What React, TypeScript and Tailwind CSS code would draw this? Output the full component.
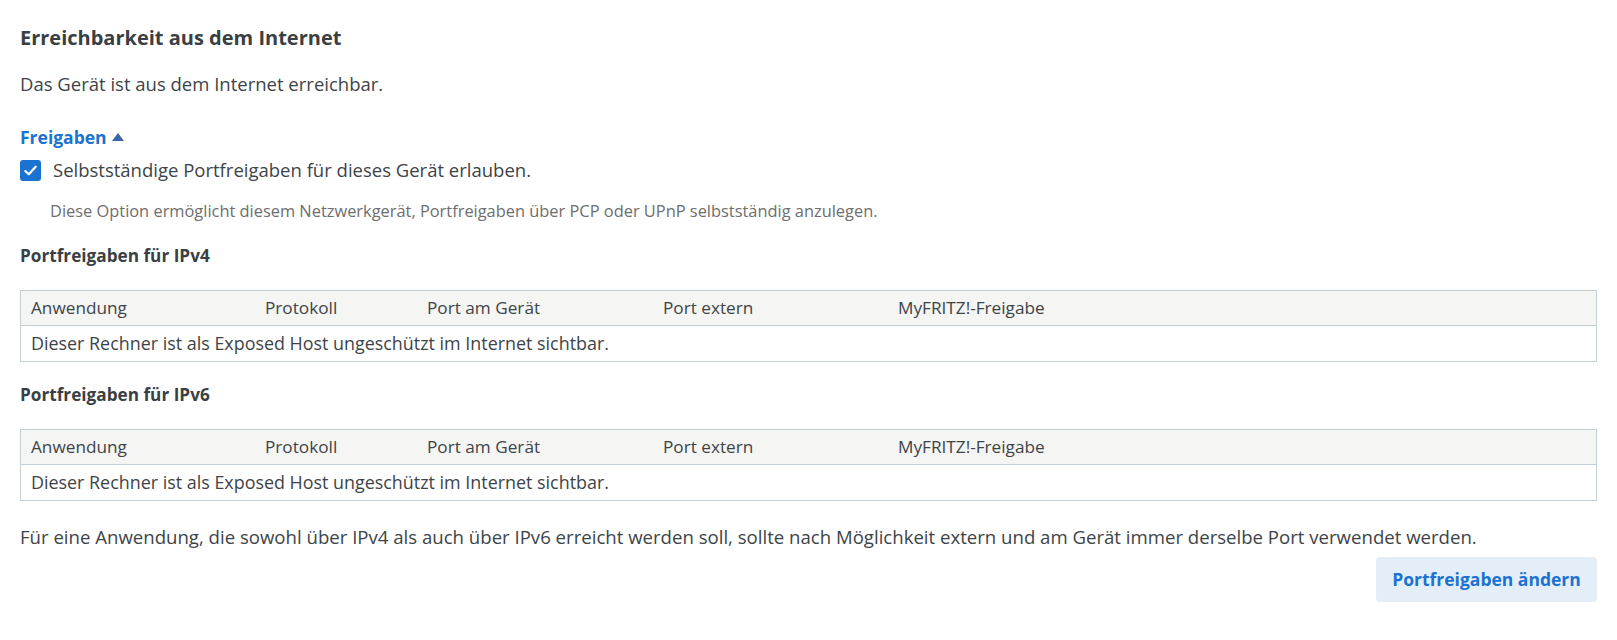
import { useState } from 'react';

const columns = ['Anwendung', 'Protokoll', 'Port am Gerät', 'Port extern', 'MyFRITZ!-Freigabe'];

function PortTable() {
  return (
    <div className="mt-[22px] border border-[#c3cfd8]">
      <div className="grid h-[35px] grid-cols-[234px_162px_236px_235px_1fr] items-center border-b border-[#c3cfd8] bg-[#f5f5f3] pl-[10px] text-[17.2px]">
        {columns.map((c) => (
          <div key={c}>{c}</div>
        ))}
      </div>
      <div className="flex h-[35px] items-center pl-[10px] text-[17.9px]">
        Dieser Rechner ist als Exposed Host ungeschützt im Internet sichtbar.
      </div>
    </div>
  );
}

export default function App() {
  const [open, setOpen] = useState(true);
  const [allowed, setAllowed] = useState(true);

  return (
    <div className="min-h-[640px] bg-white px-5 pt-[26px] font-['Open_Sans',sans-serif] text-[18.5px] text-[#3d4448]">
      <h2 className="text-[20px] font-bold leading-6 text-[#3a3f44]">Erreichbarkeit aus dem Internet</h2>
      <p className="mt-[22px] leading-6">Das Gerät ist aus dem Internet erreichbar.</p>

      <button
        onClick={() => setOpen(!open)}
        className="mt-[29px] flex h-6 items-center gap-[5px] text-[17.5px] font-bold text-[#1b72d0]"
      >
        Freigaben
        <svg width="12" height="8" viewBox="0 0 12 8">
          <path d="M6 0 L12 8 L0 8 Z" fill="#3e63a8" />
        </svg>
      </button>

      {open && (
        <>
          <label className="mt-[9px] flex h-6 items-center gap-3">
            <span
              onClick={() => setAllowed(!allowed)}
              className={`flex h-[21px] w-[21px] items-center justify-center rounded-[3px] ${
                allowed ? 'bg-[#1a73d0]' : 'border border-[#888] bg-white'
              }`}
            >
              {allowed && (
                <svg width="15" height="15" viewBox="0 0 16 16">
                  <path d="M2.5 8.5 L6.2 12 L13.5 4" fill="none" stroke="white" strokeWidth="2.4" strokeLinecap="round" strokeLinejoin="round" />
                </svg>
              )}
            </span>
            Selbstständige Portfreigaben für dieses Gerät erlauben.
          </label>
          <p className="mt-[19px] pl-[30px] text-[16.4px] leading-5 text-[#6e6e6e]">
            Diese Option ermöglicht diesem Netzwerkgerät, Portfreigaben über PCP oder UPnP selbstständig anzulegen.
          </p>

          <h3 className="mt-[23px] text-[17.2px] font-bold leading-6 text-[#3a3f44]">Portfreigaben für IPv4</h3>
          <PortTable />

          <h3 className="mt-[21px] text-[17.2px] font-bold leading-6 text-[#3a3f44]">Portfreigaben für IPv6</h3>
          <PortTable />

          <p className="mt-6 text-[18.6px] leading-6">
            Für eine Anwendung, die sowohl über IPv4 als auch über IPv6 erreicht werden soll, sollte nach Möglichkeit extern und am Gerät immer derselbe Port verwendet werden.
          </p>
          <div className="mt-2 flex justify-end">
            <button className="h-[45px] w-[221px] rounded-[4px] bg-[#e4eef8] text-[17.5px] font-bold text-[#1b72d0]">
              Portfreigaben ändern
            </button>
          </div>
        </>
      )}
    </div>
  );
}
